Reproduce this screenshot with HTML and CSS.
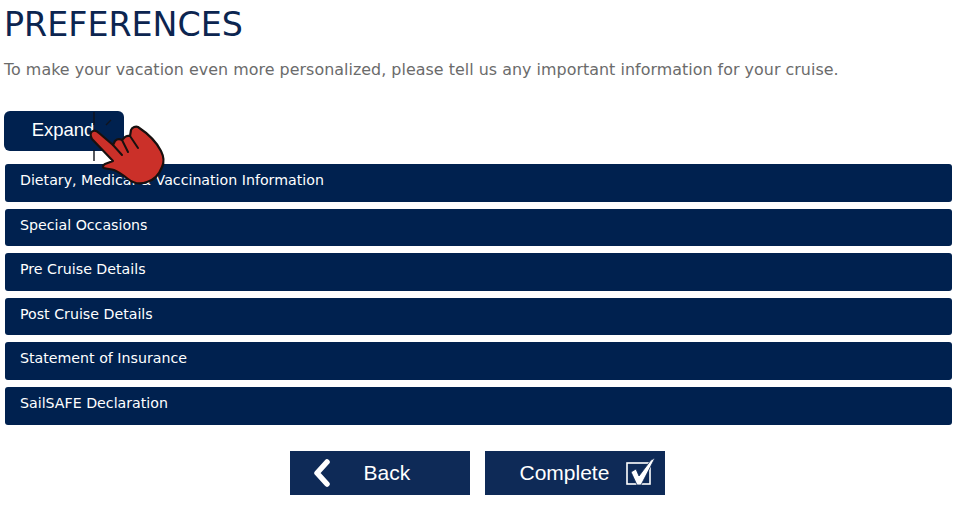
FILE: index.html
```html
<!DOCTYPE html>
<html lang="en">
<head>
    <meta charset="UTF-8">
    <title>Preferences</title>
    <link rel="stylesheet" href="styles.css">
</head>
<body>
    <h1 class="title">PREFERENCES</h1>
    <p class="intro">To make your vacation even more personalized, please tell us any important information for your cruise.</p>

    <div class="expand-wrap">
        <button class="expand-button">Expand</button>
        <svg class="hand" width="85" height="80" viewBox="0 0 85 80">
            <path d="M9 2v13M9 40v11M21 15l5-5" fill="none" stroke="#10131c" stroke-width="1.4"/>
            <path d="M7 29c-2-3-2-7 1-8 2-1 4 0 6 2l14 12 2-4c2-2 5-2 7-1l3-3c2-2 4-1 5-1l1-6c1-3 5-4 7-3 9 6 18 14 23 24 3 6 3 12 1 16-3 8-8 13-15 15-8 3-14 1-19-3-5-4-9-7-14-9-3-1-7-1-10-2-2-1-1-3 1-4l8-3z" fill="#cb3029" stroke="#17100f" stroke-width="2.2" stroke-linejoin="round"/>
            <path d="M28 35l9 10M37 30l6 12M45 26l8 12" fill="none" stroke="#17100f" stroke-width="2" stroke-linecap="round"/>
        </svg>
    </div>

    <div class="sections">
        <div class="section">Dietary, Medical &amp; Vaccination Information</div>
        <div class="section">Special Occasions</div>
        <div class="section">Pre Cruise Details</div>
        <div class="section">Post Cruise Details</div>
        <div class="section">Statement of Insurance</div>
        <div class="section">SailSAFE Declaration</div>
    </div>

    <div class="actions">
        <button class="nav-button back">
            <svg width="20" height="28" viewBox="0 0 20 28"><path d="M15 3L5 14l10 11" fill="none" stroke="#fff" stroke-width="5.5" stroke-linecap="round" stroke-linejoin="round"/></svg>
            <span>Back</span>
        </button>
        <button class="nav-button complete">
            <span>Complete</span>
            <svg width="32" height="32" viewBox="0 0 32 32"><rect x="3" y="6" width="23" height="21" fill="none" stroke="#fff" stroke-width="1.6"/><path d="M7 15l5-3 3 7L27 3l4-2-14 27h-4z" fill="#fff" stroke="#0e2a57" stroke-width="0.8"/></svg>
        </button>
    </div>
</body>
</html>
```

FILE: styles.css
```css
/* Page */
body {
    margin: 0;
    padding: 0 8px 0 4px;
    background: #ffffff;
    font-family: "DejaVu Sans", sans-serif;
}

.title {
    margin: 0;
    padding-top: 6px;
    height: 38px;
    font-size: 33.3px;
    line-height: 38px;
    font-weight: 400;
    color: #0c2550;
}

.intro {
    margin: 16px 0 0;
    height: 20px;
    font-size: 15.9px;
    letter-spacing: 0.03px;
    line-height: 20px;
    color: #6b6b6b;
    white-space: nowrap;
}

/* Expand button + pointer */
.expand-wrap {
    position: relative;
    margin-top: 31px;
    height: 53px;
}

.expand-button {
    display: block;
    width: 120px;
    height: 40px;
    padding: 0 2px 2px 0;
    border: none;
    border-radius: 6px;
    background: #00214f;
    color: #ffffff;
    font-family: "Liberation Sans", sans-serif;
    font-size: 18.5px;
}

.hand {
    position: absolute;
    left: 81px;
    top: -1px;
}

/* Accordion rows */
.sections {
    display: flex;
    flex-direction: column;
    gap: 7px;
}

.section {
    height: 37.6px;
    margin-left: 1px;
    padding-left: 15px;
    border-radius: 3px;
    background: #00214f;
    color: #ffffff;
    font-size: 14.2px;
    line-height: 33px;
}

/* Bottom buttons */
.actions {
    display: flex;
    justify-content: center;
    gap: 15px;
    margin-top: 26.4px;
    padding-right: 2px;
}

.nav-button {
    display: flex;
    align-items: center;
    width: 180px;
    height: 44px;
    padding: 0;
    border: none;
    background: #0e2a57;
    color: #ffffff;
    font-family: "Liberation Sans", sans-serif;
    font-size: 21px;
}

.back {
    gap: 32px;
    padding-left: 22px;
}

.complete {
    gap: 15px;
    padding-left: 35px;
}
```
